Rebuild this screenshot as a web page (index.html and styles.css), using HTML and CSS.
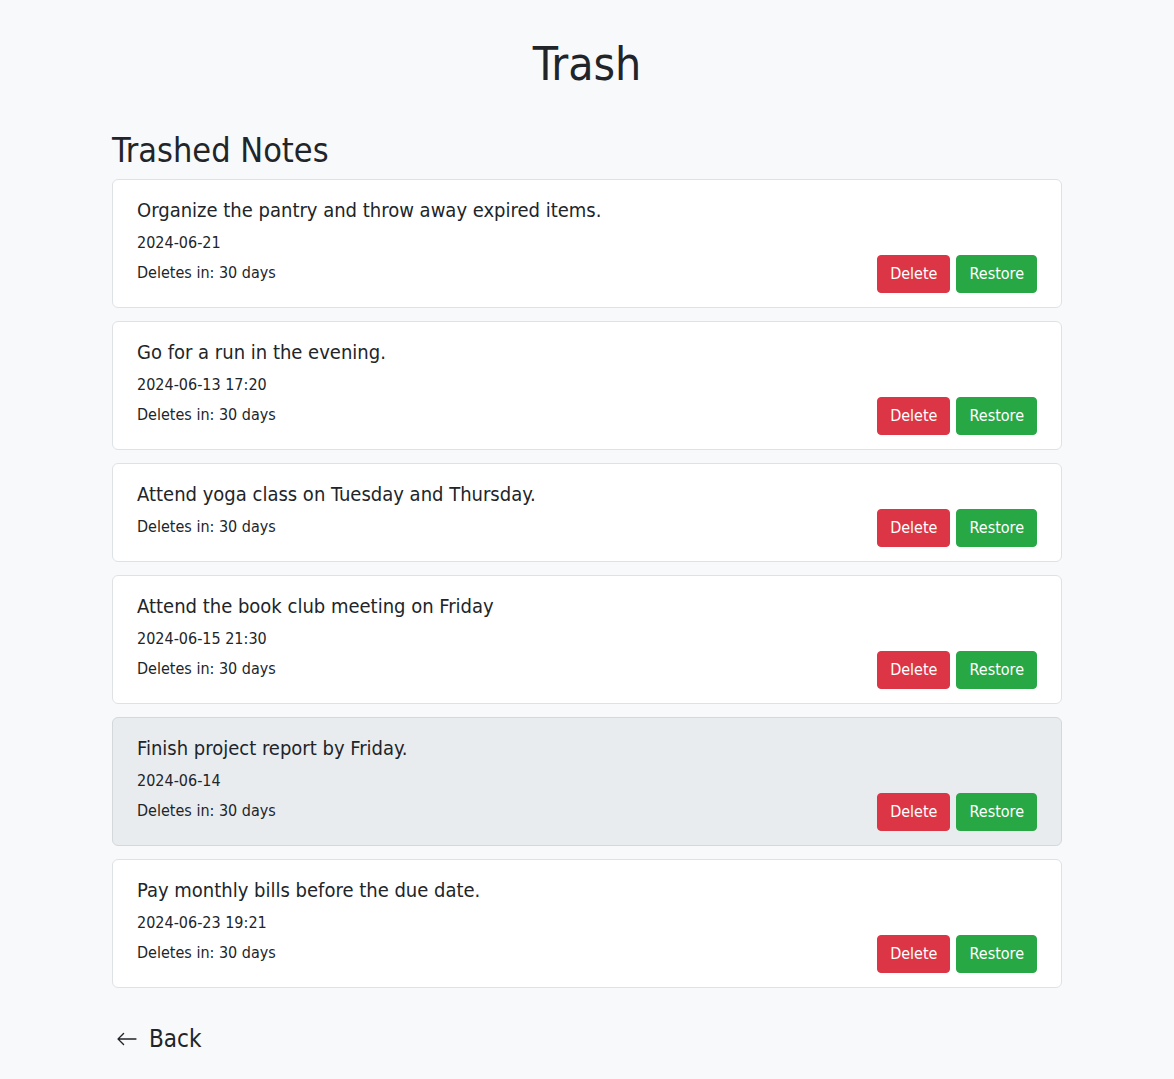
FILE: index.html
```html
<!DOCTYPE html>
<html lang="en">
<head>
<meta charset="utf-8">
<title>Trash</title>
<link rel="stylesheet" href="styles.css">
</head>
<body>
<main class="page">
  <h1 class="page-title">Trash</h1>
  <h2 class="section-title">Trashed Notes</h2>
  <ul class="notes">
    <li class="note">
      <div class="note-info">
        <div class="note-title">Organize the pantry and throw away expired items.</div>
        <div class="note-date">2024-06-21</div>
        <div class="note-expiry">Deletes in: 30 days</div>
      </div>
      <div class="note-actions">
        <button class="btn btn-delete">Delete</button>
        <button class="btn btn-restore">Restore</button>
      </div>
    </li>
    <li class="note">
      <div class="note-info">
        <div class="note-title">Go for a run in the evening.</div>
        <div class="note-date">2024-06-13 17:20</div>
        <div class="note-expiry">Deletes in: 30 days</div>
      </div>
      <div class="note-actions">
        <button class="btn btn-delete">Delete</button>
        <button class="btn btn-restore">Restore</button>
      </div>
    </li>
    <li class="note">
      <div class="note-info">
        <div class="note-title">Attend yoga class on Tuesday and Thursday.</div>
        <div class="note-expiry">Deletes in: 30 days</div>
      </div>
      <div class="note-actions">
        <button class="btn btn-delete">Delete</button>
        <button class="btn btn-restore">Restore</button>
      </div>
    </li>
    <li class="note">
      <div class="note-info">
        <div class="note-title">Attend the book club meeting on Friday</div>
        <div class="note-date">2024-06-15 21:30</div>
        <div class="note-expiry">Deletes in: 30 days</div>
      </div>
      <div class="note-actions">
        <button class="btn btn-delete">Delete</button>
        <button class="btn btn-restore">Restore</button>
      </div>
    </li>
    <li class="note note-active">
      <div class="note-info">
        <div class="note-title">Finish project report by Friday.</div>
        <div class="note-date">2024-06-14</div>
        <div class="note-expiry">Deletes in: 30 days</div>
      </div>
      <div class="note-actions">
        <button class="btn btn-delete">Delete</button>
        <button class="btn btn-restore">Restore</button>
      </div>
    </li>
    <li class="note">
      <div class="note-info">
        <div class="note-title">Pay monthly bills before the due date.</div>
        <div class="note-date">2024-06-23 19:21</div>
        <div class="note-expiry">Deletes in: 30 days</div>
      </div>
      <div class="note-actions">
        <button class="btn btn-delete">Delete</button>
        <button class="btn btn-restore">Restore</button>
      </div>
    </li>
  </ul>
  <a class="back-link" href="#">
    <svg class="back-icon" viewBox="0 0 16 16" width="22" height="22" aria-hidden="true"><path fill="currentColor" fill-rule="evenodd" d="M15 8a.5.5 0 0 0-.5-.5H2.707l3.147-3.146a.5.5 0 1 0-.708-.708l-4 4a.5.5 0 0 0 0 .708l4 4a.5.5 0 0 0 .708-.708L2.707 8.5H14.5A.5.5 0 0 0 15 8z"/></svg>
    <span>Back</span>
  </a>
</main>
</body>
</html>
```

FILE: styles.css
```css
html, body {
  margin: 0;
  padding: 0;
}
body {
  background: #f8f9fa;
  color: #212529;
  font-family: "DejaVu Sans Condensed", "DejaVu Sans", sans-serif;
  font-size: 16px;
  line-height: 1.5;
}
.page {
  width: 950px;
  margin: 0 auto;
  padding-top: 37px;
}
.page-title {
  margin: 0 0 38px;
  text-align: center;
  font-size: 46px;
  font-weight: 400;
  line-height: 1.2;
}
.section-title {
  margin: 0 0 8px;
  font-size: 34px;
  font-weight: 400;
  line-height: 1.2;
}
.notes {
  list-style: none;
  margin: 0;
  padding: 0;
  display: flex;
  flex-direction: column;
  gap: 13px;
}
.note {
  display: flex;
  justify-content: space-between;
  align-items: flex-end;
  background: #fff;
  border: 1px solid #dfe2e5;
  border-radius: 6px;
  padding: 18px 24px 14px;
}
.note-active {
  background: #e9ecef;
  border-color: #d5d8db;
}
.note-title {
  font-size: 20px;
  line-height: 24px;
  margin-bottom: 9px;
}
.note-date {
  margin-bottom: 6px;
}
.note-expiry {
  margin-bottom: 8px;
}
.note-actions {
  display: flex;
  gap: 6px;
}
.btn {
  font-family: inherit;
  font-size: 16px;
  line-height: 24px;
  padding: 6px 12px;
  border: 1px solid transparent;
  border-radius: 4px;
  color: #fff;
  cursor: pointer;
}
.btn-delete {
  background: #dc3545;
  border-color: #dc3545;
}
.btn-restore {
  background: #28a745;
  border-color: #28a745;
}
.back-link {
  display: inline-flex;
  align-items: center;
  gap: 11px;
  margin-top: 36px;
  color: #212529;
  text-decoration: none;
  font-size: 24px;
  line-height: 30px;
}
.back-icon {
  margin-left: 4px;
}
```
